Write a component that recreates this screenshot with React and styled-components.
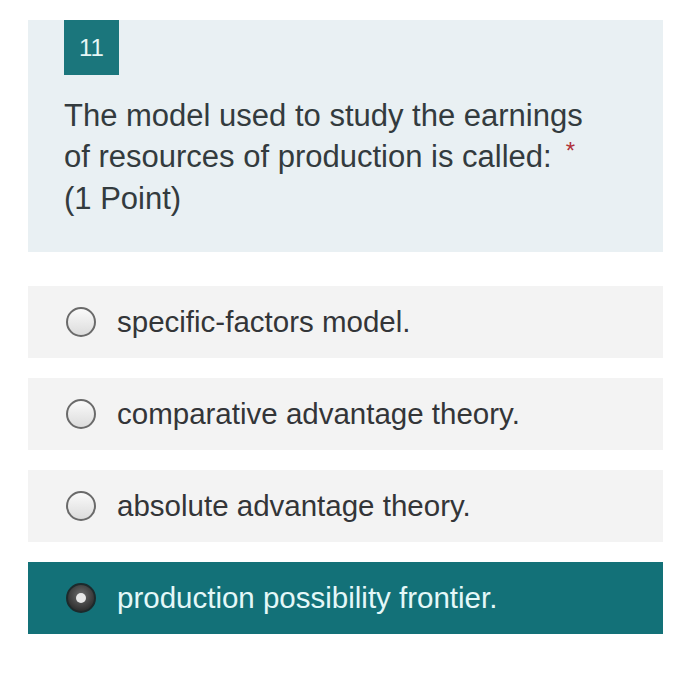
import React, { useState } from 'react';
import styled, { createGlobalStyle } from 'styled-components';

const GlobalStyle = createGlobalStyle`
  html, body {
    margin: 0;
    padding: 0;
    background: #ffffff;
    font-family: 'Liberation Sans', Arial, sans-serif;
  }
`;

const Page = styled.div`
  width: 691px;
  height: 700px;
  padding: 20px 28px 0 28px;
  box-sizing: border-box;
  display: flex;
  flex-direction: column;
`;

const QuestionCard = styled.div`
  background: #e9f0f3;
  height: 232px;
  padding: 0 36px;
  box-sizing: border-box;
`;

const Badge = styled.div`
  width: 55px;
  height: 55px;
  background: #1b767c;
  color: #e6f6f6;
  font-size: 24px;
  display: flex;
  align-items: center;
  justify-content: center;
`;

const Title = styled.div`
  margin-top: 21px;
  font-size: 31px;
  line-height: 40.5px;
  color: #333b3e;
`;

const Required = styled.span`
  color: #b0323a;
  margin-left: 14px;
  font-size: 24px;
  position: relative;
  top: -8px;
`;

const Options = styled.div`
  margin-top: 34px;
  display: flex;
  flex-direction: column;
  gap: 20px;
`;

const Option = styled.label`
  height: 72px;
  display: flex;
  align-items: center;
  padding-left: 38px;
  background: ${({ $selected }) => ($selected ? '#137178' : '#f3f3f3')};
  color: ${({ $selected }) => ($selected ? '#e4f8f8' : '#333538')};
  font-size: 29.5px;
  cursor: pointer;
`;

const Radio = styled.span`
  width: 30px;
  height: 30px;
  border-radius: 50%;
  box-sizing: border-box;
  margin-right: 21px;
  flex-shrink: 0;
  display: flex;
  align-items: center;
  justify-content: center;
  border: 2px solid ${({ $selected }) => ($selected ? '#1c2a2c' : '#6a6a6a')};
  background: ${({ $selected }) =>
    $selected
      ? 'radial-gradient(circle at 50% 40%, #6d6d6d 0%, #333 70%, #1f1f1f 100%)'
      : 'linear-gradient(#fafafa, #dcdcdc)'};
  &::after {
    content: '';
    display: ${({ $selected }) => ($selected ? 'block' : 'none')};
    width: 10px;
    height: 10px;
    border-radius: 50%;
    background: #e8e8e8;
  }
`;

const choices = [
  'specific-factors model.',
  'comparative advantage theory.',
  'absolute advantage theory.',
  'production possibility frontier.',
];

export default function App() {
  const [picked, setPicked] = useState(3);
  return (
    <>
      <GlobalStyle />
      <Page>
        <QuestionCard>
          <Badge>11</Badge>
          <Title>
            The model used to study the earnings
            <br />
            of resources of production is called:
            <Required>*</Required>
            <br />
            (1 Point)
          </Title>
        </QuestionCard>
        <Options>
          {choices.map((c, i) => (
            <Option key={c} $selected={picked === i} onClick={() => setPicked(i)}>
              <Radio $selected={picked === i} />
              {c}
            </Option>
          ))}
        </Options>
      </Page>
    </>
  );
}
